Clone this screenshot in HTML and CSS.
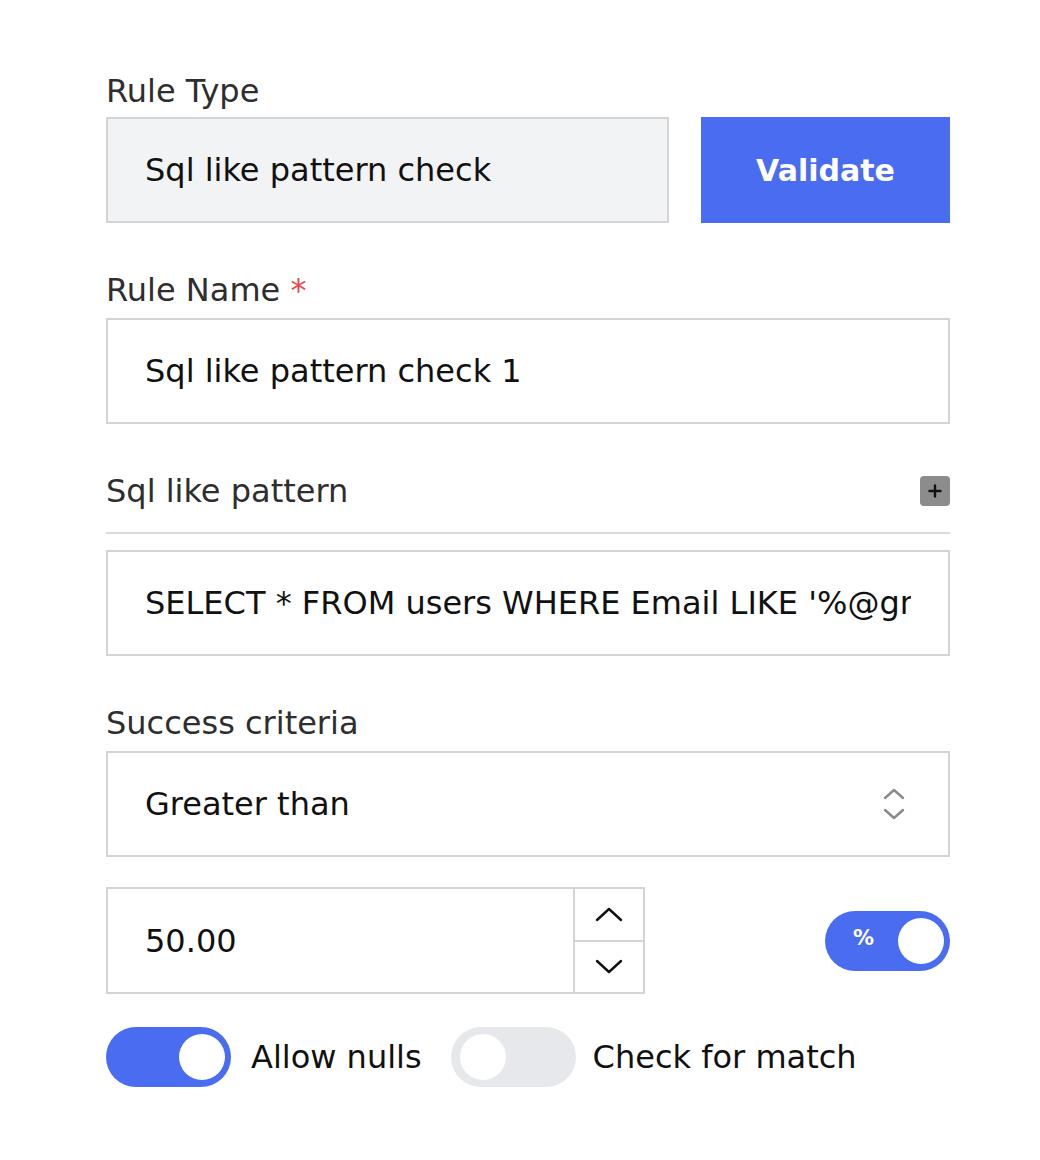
FILE: index.html
```html
<!DOCTYPE html>
<html lang="en">
<head>
    <meta charset="UTF-8">
    <title>Rule Editor</title>
    <link rel="stylesheet" href="styles.css">
</head>
<body>
    <form class="rule-form">
        <!-- Rule type -->
        <div class="field field-first">
            <label class="label">Rule Type</label>
            <div class="row">
                <div class="input input-readonly">Sql like pattern check</div>
                <button type="button" class="btn-validate">Validate</button>
            </div>
        </div>

        <!-- Rule name -->
        <div class="field">
            <label class="label">Rule Name <span class="required">*</span></label>
            <div class="input">Sql like pattern check 1</div>
        </div>

        <!-- Pattern -->
        <div class="field">
            <div class="section-head">
                <span class="label">Sql like pattern</span>
                <span class="add-btn">
                    <svg width="14" height="14" viewBox="0 0 14 14"><path d="M7 1.5v11M1.5 7h11" stroke="#111" stroke-width="2.4" stroke-linecap="round"/></svg>
                </span>
            </div>
            <div class="input"><span class="clip">SELECT * FROM users WHERE Email LIKE '%@gmail.com'</span></div>
        </div>

        <!-- Success criteria -->
        <div class="field">
            <label class="label">Success criteria</label>
            <div class="input select">
                <span>Greater than</span>
                <svg class="select-icon" width="24" height="34" viewBox="0 0 24 34"><path d="M3 11l9-8 9 8M3 23l9 8 9-8" fill="none" stroke="#8a8a8a" stroke-width="2.4" stroke-linecap="round" stroke-linejoin="round"/></svg>
            </div>
        </div>

        <div class="number-row">
            <div class="number-input">
                <span class="number-value">50.00</span>
                <div class="spinner">
                    <div class="spin">
                        <svg width="28" height="16" viewBox="0 0 28 16"><path d="M2 14L14 3l12 11" fill="none" stroke="#111" stroke-width="2.4" stroke-linecap="round" stroke-linejoin="round"/></svg>
                    </div>
                    <div class="spin">
                        <svg width="28" height="16" viewBox="0 0 28 16"><path d="M2 2l12 11L26 2" fill="none" stroke="#111" stroke-width="2.4" stroke-linecap="round" stroke-linejoin="round"/></svg>
                    </div>
                </div>
            </div>
            <span class="toggle on">
                <span class="toggle-text">%</span>
                <span class="knob"></span>
            </span>
        </div>

        <div class="switch-row">
            <span class="toggle on"><span class="knob"></span></span>
            <span class="switch-label">Allow nulls</span>
            <span class="toggle"><span class="knob"></span></span>
            <span class="switch-label">Check for match</span>
        </div>
    </form>
</body>
</html>
```

FILE: styles.css
```css
body {
    margin: 0;
    background-color: #FFFFFF;
    font-family: "DejaVu Sans", Inter, sans-serif;
    color: #141414;
}
.rule-form {
    width: 844px;
    padding: 71px 0 0 106px;
}
.field {
    margin-top: 47px;
}
.field-first {
    margin-top: 0;
}
.label {
    display: block;
    font-size: 32px;
    line-height: 40px;
    height: 40px;
    color: #2e2e2e;
    margin-bottom: 8px;
}
.field-first .label {
    margin-bottom: 6px;
}
.required {
    color: #e5484d;
}
.row {
    display: flex;
    gap: 32px;
}
.input {
    box-sizing: border-box;
    height: 106px;
    border: 2px solid #d4d4d4;
    padding: 0 37px;
    display: flex;
    align-items: center;
    font-size: 32px;
    color: #111111;
    white-space: nowrap;
    flex: 1;
}
.input-readonly {
    background-color: #F1F3F5;
}
.clip {
    overflow: hidden;
    flex: 1;
}
.btn-validate {
    width: 249px;
    height: 106px;
    border: none;
    background-color: #4A6CF0;
    color: #FFFFFF;
    font-family: inherit;
    font-size: 30px;
    font-weight: 700;
    cursor: pointer;
}
.section-head {
    display: flex;
    justify-content: space-between;
    align-items: center;
    padding-bottom: 21px;
    border-bottom: 2px solid #DADADA;
    margin-bottom: 16px;
}
.section-head .label {
    margin-bottom: 0;
}
.add-btn {
    width: 30px;
    height: 30px;
    border-radius: 4px;
    background-color: #8C8C8C;
    display: flex;
    align-items: center;
    justify-content: center;
}
.select {
    justify-content: space-between;
    padding-right: 42px;
}
.number-row {
    display: flex;
    justify-content: space-between;
    align-items: center;
    margin-top: 30px;
}
.number-input {
    box-sizing: border-box;
    width: 539px;
    height: 107px;
    border: 2px solid #d4d4d4;
    display: flex;
}
.number-value {
    flex: 1;
    display: flex;
    align-items: center;
    padding-left: 37px;
    font-size: 32px;
    color: #111111;
}
.spinner {
    width: 68px;
    border-left: 2px solid #d4d4d4;
    display: flex;
    flex-direction: column;
}
.spin {
    flex: 1;
    display: flex;
    align-items: center;
    justify-content: center;
}
.spin + .spin {
    border-top: 2px solid #d4d4d4;
}
.toggle {
    position: relative;
    box-sizing: border-box;
    width: 125px;
    height: 60px;
    border-radius: 30px;
    background-color: #E6E8EB;
    display: inline-flex;
    align-items: center;
    padding: 0 6px;
    flex-shrink: 0;
}
.toggle.on {
    background-color: #4A6CF0;
    justify-content: flex-end;
}
.knob {
    width: 46px;
    height: 46px;
    border-radius: 50%;
    background-color: #FFFFFF;
}
.toggle:not(.on) .knob {
    margin-left: 3px;
}
.toggle-text {
    position: absolute;
    left: 28px;
    top: 15px;
    color: #FFFFFF;
    font-size: 21px;
    font-weight: 700;
}
.switch-row {
    display: flex;
    align-items: center;
    margin-top: 33px;
}
.switch-label {
    font-size: 32px;
    color: #111111;
    margin: 0 29px 0 20px;
}
.switch-label:last-child {
    margin-left: 17px;
}
```
